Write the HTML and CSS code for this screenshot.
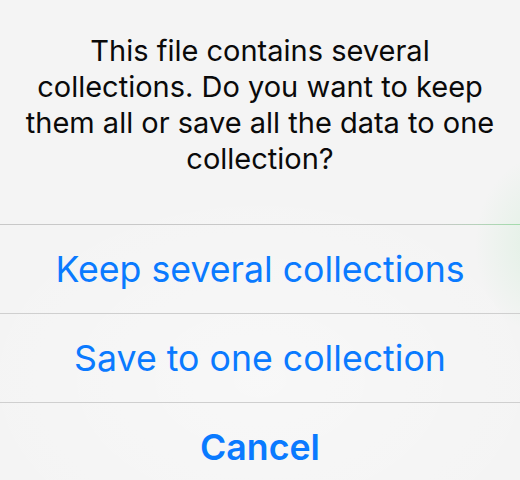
FILE: index.html
```html
<!DOCTYPE html>
<html>
<head>
<meta charset="utf-8">
<link rel="stylesheet" href="styles.css">
</head>
<body>
<div class="sheet">
  <div class="message">This file contains several<br>collections. Do you want to keep<br>them all or save all the data to one<br>collection?</div>
  <div class="action">Keep several collections</div>
  <div class="action">Save to one collection</div>
  <div class="action cancel">Cancel</div>
</div>
</body>
</html>
```

FILE: styles.css
```css
html, body {
  margin: 0;
  padding: 0;
}
body {
  width: 520px;
  height: 480px;
  overflow: hidden;
  background-color: #f4f4f4;
  background-image:
    radial-gradient(ellipse 70px 90px at 545px 245px, rgba(150, 225, 165, 0.22), rgba(150, 225, 165, 0) 100%),
    radial-gradient(ellipse 300px 200px at 260px 380px, rgba(255,255,255,0.35), rgba(255,255,255,0) 100%);
  font-family: Inter, "Noto Sans", sans-serif;
}
.sheet {
  display: flex;
  flex-direction: column;
}
.message {
  height: 225px;
  box-sizing: border-box;
  padding-top: 33px;
  text-align: center;
  font-size: 29px;
  line-height: 36px;
  color: #0a0a0a;
  border-bottom: 1px solid;
  border-image: linear-gradient(to right, #c8c8c8 0, #c8c8c8 84%, #a2dcab 100%) 1;
}
.action {
  height: 88px;
  display: flex;
  align-items: center;
  justify-content: center;
  font-size: 35.7px;
  color: #0a7aff;
  border-bottom: 1px solid #cfcfcf;
}
.cancel {
  font-weight: 600;
  border-bottom: none;
}
```
